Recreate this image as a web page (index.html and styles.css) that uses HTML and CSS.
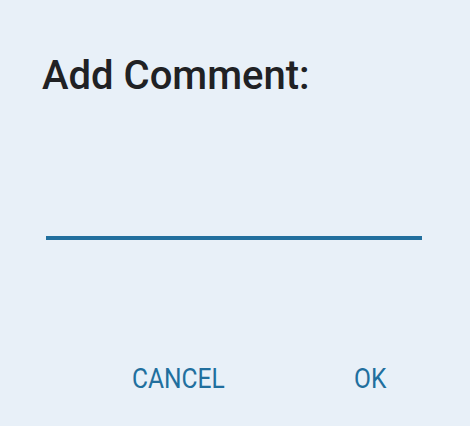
FILE: index.html
```html
<!DOCTYPE html>
<html lang="en">

<head>
    <meta charset="UTF-8">
    <meta name="viewport" content="width=device-width, initial-scale=1.0">
    <link rel="stylesheet" href="styles.css">
</head>

<body>
    <div class="dialog">
        <div class="dialog-title">Add Comment:</div>
        <!-- Comment input -->
        <input class="comment-input" type="text">
        <div class="dialog-actions">
            <button class="action-btn cancel-btn">CANCEL</button>
            <button class="action-btn ok-btn">OK</button>
        </div>
    </div>
</body>

</html>
```

FILE: styles.css
```css
body {
    margin: 0;
    background-color: #e8f0f8;
    font-family: Roboto, 'Noto Sans', sans-serif;
}

.dialog {
    width: 470px;
    height: 426px;
    box-sizing: border-box;
    padding: 50px 48px 0 42px;
    display: flex;
    flex-direction: column;
}

.dialog-title {
    font-size: 40px;
    font-weight: 500;
    color: #202124;
    line-height: 52px;
}

.comment-input {
    margin: 108px 0 0 4px;
    width: 376px;
    height: 30px;
    padding: 0;
    border: none;
    border-bottom: 4px solid #216f9e;
    background: transparent;
    outline: none;
    box-sizing: border-box;
}

.dialog-actions {
    display: flex;
    margin-top: 124px;
}

.action-btn {
    background: none;
    border: none;
    padding: 0;
    font-family: Roboto, sans-serif;
    font-size: 27px;
    color: #216f9e;
    line-height: 30px;
    transform-origin: left center;
    transform: scaleX(0.91);
}

.cancel-btn {
    margin-left: 90px;
}

.ok-btn {
    margin-left: 120px;
}
```
